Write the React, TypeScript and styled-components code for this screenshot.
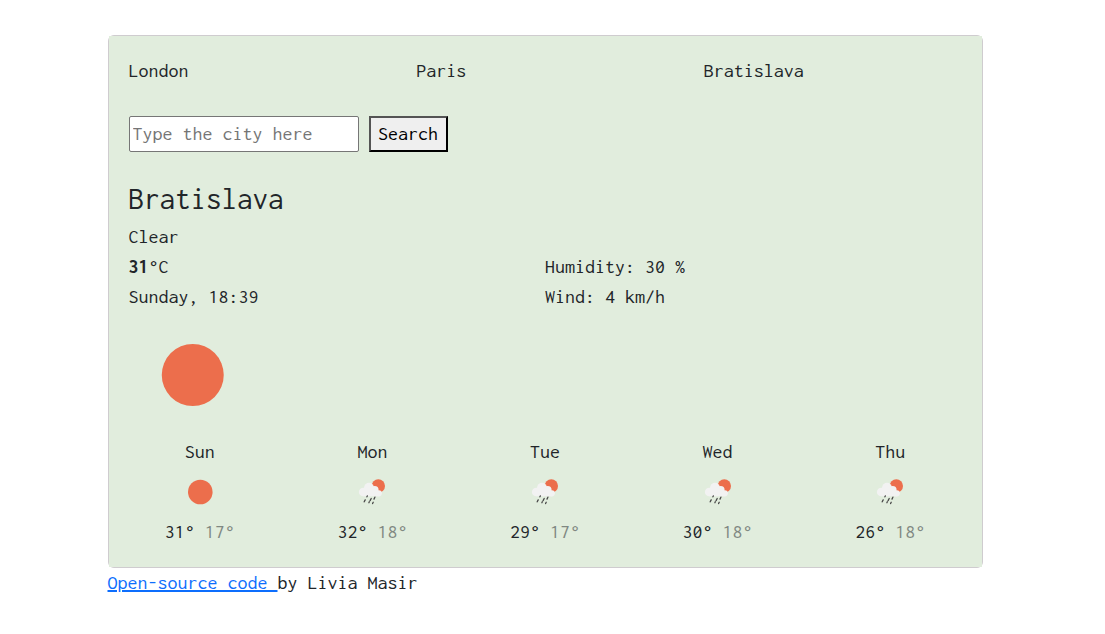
import React, { useState } from "react";
import styled, { createGlobalStyle } from "styled-components";

const GlobalStyle = createGlobalStyle`
  *, *::before, *::after { box-sizing: border-box; }
  body {
    margin: 0;
    background: #fff;
    color: #212529;
    font-family: Inconsolata, "Noto Sans Mono CJK SC", "Liberation Mono", monospace;
    font-size: 20px;
    line-height: 30px;
  }
`;

const Page = styled.div`
  padding: 35px 15px 0 0;
`;

const Container = styled.main`
  max-width: 875px;
  margin: 0 auto;
`;

const Card = styled.section`
  border: 1px solid #cfcccf;
  border-radius: 6px;
`;

const CardBody = styled.div`
  padding: 20px;
  background: #e1eddd;
`;

const Columns = styled.div<{ $count: number }>`
  display: grid;
  grid-template-columns: repeat(${(p) => p.$count}, 1fr);
  margin: 0 -15px;
`;

const City = styled.a`
  padding: 0 15px;
  color: inherit;
  text-decoration: none;
`;

const SearchForm = styled.form`
  display: flex;
  gap: 10px;
  margin: 30px 0 28px;
`;

const SearchInput = styled.input`
  width: 230px;
  height: 36px;
  padding: 0 3px 2px;
  border: 1px solid #767676;
  border-radius: 2px;
  background: #fff;
  color: inherit;
  font: inherit;
  &::placeholder { color: #757575; opacity: 1; }
`;

const SearchButton = styled.button`
  width: 79px;
  height: 36px;
  padding: 0;
  border: 2px outset #000;
  border-radius: 0;
  background: #efefef;
  color: #000;
  font: inherit;
`;

const Title = styled.h1`
  margin: 0 0 4px;
  font-size: 31px;
  font-weight: 400;
  line-height: 38px;
`;

const Line = styled.div``;

const Details = styled.div`
  display: grid;
  grid-template-columns: 1fr 1fr;
`;

const Hero = styled.div`
  width: 126px;
  height: 125px;
  display: grid;
  place-items: center;
`;

const Day = styled.div`
  padding: 0 15px;
  text-align: center;
`;

const DayIcon = styled.div`
  height: 50px;
  display: grid;
  place-items: center;
`;

const Low = styled.span`
  opacity: 0.5;
`;

const SourceLink = styled.a`
  color: #0d6efd;
  white-space: pre;
`;

const SunIcon = ({ size }: { size: number }) => (
  <svg width={size} height={size} viewBox="0 0 50 50" role="img" aria-label="Clear">
    <circle cx="25.3" cy="25" r="12.3" fill="#ec6e4c" />
  </svg>
);

const RainIcon = () => (
  <svg width="50" height="50" viewBox="0 0 50 50" role="img" aria-label="Rain">
    <circle cx="31.3" cy="18.9" r="6.7" fill="#ec6e4c" />
    <g fill="#f2f2f2">
      <circle cx="16.2" cy="25" r="4.3" />
      <circle cx="22" cy="20.6" r="4.9" />
      <circle cx="27.600" cy="23" r="4" />
      <circle cx="31.800" cy="26.300" r="3.100" />
      <path d="M16.200 24h15.600v5.300H16.200z" />
    </g>
    <path
      d="M20.300 28.900l-.4.9M18.200 32.900l-1 1.900M24.200 31.500l-1.100 2.100M27.900 30.200l-.9 1.900M22.300 34.800l-.4.9M26.200 35.300l-.6 1.300"
      stroke="#484848"
      strokeWidth="1.300"
      strokeLinecap="round"
    />
  </svg>
);

const days = [
  { name: "Sun", high: 31, low: 17, sunny: true },
  { name: "Mon", high: 32, low: 18, sunny: false },
  { name: "Tue", high: 29, low: 17, sunny: false },
  { name: "Wed", high: 30, low: 18, sunny: false },
  { name: "Thu", high: 26, low: 18, sunny: false },
];

export default function App() {
  const [query, setQuery] = useState("");
  return (
    <>
      <GlobalStyle />
      <Page>
        <Container>
          <Card>
            <CardBody>
              <Columns as="nav" $count={3}>
                {["London", "Paris", "Bratislava"].map((city) => (
                  <City key={city} href="#">{city}</City>
                ))}
              </Columns>
              <SearchForm onSubmit={(e) => e.preventDefault()}>
                <SearchInput
                  type="search"
                  aria-label="City"
                  placeholder="Type the city here"
                  value={query}
                  onChange={(e) => setQuery(e.target.value)}
                />
                <SearchButton type="submit">Search</SearchButton>
              </SearchForm>
              <Title>Bratislava</Title>
              <Line>Clear</Line>
              <Details>
                <Line><strong>31</strong>°C</Line>
                <Line>Humidity: 30 %</Line>
                <Line>Sunday, 18:39</Line>
                <Line>Wind: 4 km/h</Line>
              </Details>
              <Hero><SunIcon size={126} /></Hero>
              <Columns $count={5}>
                {days.map((d) => (
                  <Day key={d.name}>
                    <Line>{d.name}</Line>
                    <DayIcon>{d.sunny ? <SunIcon size={50} /> : <RainIcon />}</DayIcon>
                    <Line>{d.high}° <Low>{d.low}°</Low></Line>
                  </Day>
                ))}
              </Columns>
            </CardBody>
          </Card>
          <footer>
            <SourceLink href="#">{"Open-source code "}</SourceLink>by Livia Masir
          </footer>
        </Container>
      </Page>
    </>
  );
}
